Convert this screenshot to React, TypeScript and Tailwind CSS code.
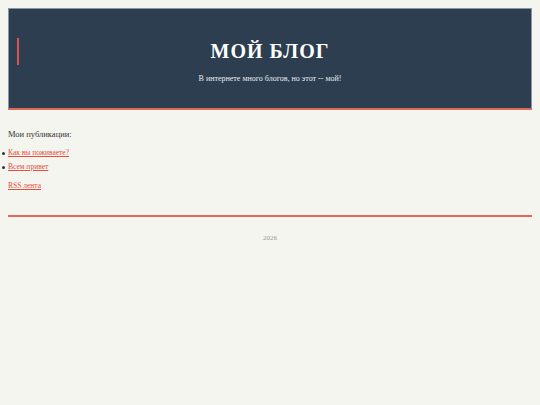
export default function App() {
  const posts = ["Как вы поживаете?", "Всем привет"];

  return (
    <div className="min-h-[405px] bg-[#f5f5f0] px-2 pt-2 font-['Liberation_Serif',serif] text-[#333]">
      <header className="relative border border-[#8a96a3] border-b-2 border-b-[#e0675a] bg-[#2c3e50] pb-[23px] pt-[28px] text-center">
        <div className="absolute left-[8px] top-[29px] h-[27px] w-[2px] bg-[#d9534f]" />
        <h1 className="text-[20px] font-bold leading-[28px] tracking-[1px] text-white">
          МОЙ БЛОГ
        </h1>
        <p className="mt-[8px] text-[8px] leading-[12px] text-[#e8ecef]">
          В интернете много блогов, но этот -- мой!
        </p>
      </header>

      <main className="pt-[18px]">
        <p className="text-[8.5px] leading-[12px] text-[#333]">Мои публикации:</p>
        <ul className="mt-[8px] text-[7.5px] leading-[10px]">
          {posts.map((p) => (
            <li key={p} className="-ml-[6px] mb-[4px] flex items-center">
              <span className="mr-[3px] h-[3px] w-[3px] rounded-full bg-[#333]" />
              <a href="#" className="text-[#e74c3c] underline">
                {p}
              </a>
            </li>
          ))}
        </ul>
        <p className="mt-[9px] text-[7.5px] leading-[10px]">
          <a href="#" className="text-[#e74c3c] underline">
            RSS лента
          </a>
        </p>
      </main>

      <footer className="mt-[24px] border-t-2 border-[#e0675a] pt-[16px] text-center text-[7px] text-[#999]">
        2026
      </footer>
    </div>
  );
}
